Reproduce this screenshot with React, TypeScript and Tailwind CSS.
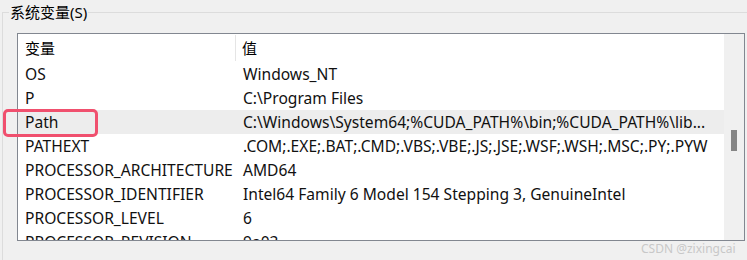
const rows: [string, string][] = [
  ["OS", "Windows_NT"],
  ["P", "C:\\Program Files"],
  ["Path", "C:\\Windows\\System64;%CUDA_PATH%\\bin;%CUDA_PATH%\\lib..."],
  ["PATHEXT", ".COM;.EXE;.BAT;.CMD;.VBS;.VBE;.JS;.JSE;.WSF;.WSH;.MSC;.PY;.PYW"],
  ["PROCESSOR_ARCHITECTURE", "AMD64"],
  ["PROCESSOR_IDENTIFIER", "Intel64 Family 6 Model 154 Stepping 3, GenuineIntel"],
  ["PROCESSOR_LEVEL", "6"],
  ["PROCESSOR_REVISION", "9a03"],
];

export default function App() {
  return (
    <div
      className="relative w-[747px] h-[260px] overflow-hidden bg-[#f0f0f0] text-[15.6px] text-black"
      style={{ fontFamily: '"Noto Sans", "Noto Sans CJK SC", sans-serif' }}
    >
      {/* group box */}
      <div className="absolute left-[2px] top-[12px] w-[760px] h-[260px] border-l border-t border-[#dcdcdc]" />
      <div className="absolute left-[9px] top-[1px] bg-[#f0f0f0] px-[1px] leading-[22px] text-[15px]">系统变量(S)</div>

      <div className="pt-[33px] pl-[17px]">
        <div className="flex w-[728px] h-[208px] border border-[#828790] bg-white">
          <div className="flex-1 overflow-hidden">
            <div className="flex h-[28px] items-center">
              <div className="w-[218px] pl-[7px] border-r border-[#e5e5e5] h-[26px] flex items-center text-[15px]">变量</div>
              <div className="pl-[6px] text-[15px]">值</div>
            </div>
            {rows.map(([k, v]) => (
              <div
                key={k}
                className={`flex h-[24px] items-center pt-[2px] whitespace-nowrap text-[#111] ${k === "Path" ? "bg-[#ededed]" : ""}`}
              >
                <div className="w-[218px] pl-[7px]">{k}</div>
                <div className="pl-[7px]">{v}</div>
              </div>
            ))}
          </div>
          <div className="w-[20px] bg-[#f0f0f0] pt-[96px] flex justify-center">
            <div className="w-[6px] h-[21px] bg-[#858585]" />
          </div>
        </div>
      </div>

      {/* highlight box */}
      <div className="absolute left-[3px] top-[109px] w-[95px] h-[28px] border-[3px] border-[#f0506e] rounded-[5px]" />

      <div
        className="absolute left-[641px] top-[240px] text-[12px] text-[#c8c8c8]"
        style={{ fontFamily: '"Noto Sans", sans-serif' }}
      >
        CSDN @zixingcai
      </div>
    </div>
  );
}
